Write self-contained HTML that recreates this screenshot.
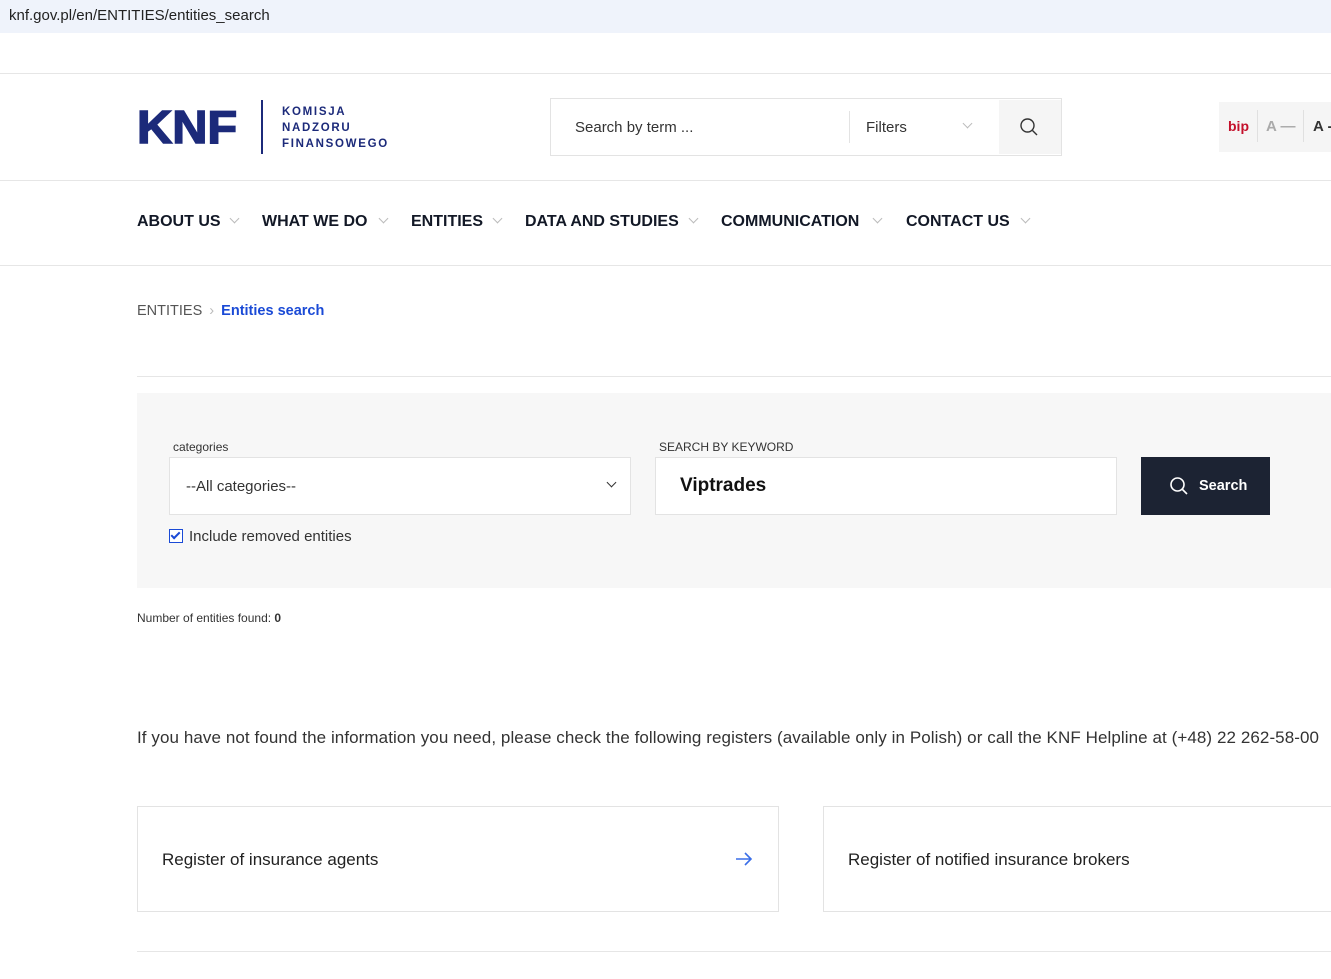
<!DOCTYPE html>
<html><head><meta charset="utf-8"><style>
*{margin:0;padding:0;box-sizing:border-box}
body{width:1331px;height:979px;overflow:hidden;background:#fff;font-family:"Liberation Sans",Arial,sans-serif;color:#1b1f2b;position:relative}
.abs{position:absolute;white-space:nowrap}
.nav span{position:absolute;top:213px;font-size:16px;font-weight:bold;color:#121826;white-space:nowrap}
.chev{display:inline-block;width:7px;height:7px;border-right:1.3px solid #bbb;border-bottom:1.3px solid #bbb;transform:rotate(45deg);position:absolute;top:215px}
</style></head><body>
<div class="abs" style="left:0;top:0;width:1331px;height:33px;background:#eff3fb"></div>
<div class="abs" style="left:9px;top:7px;font-size:15px;color:#222">knf.gov.pl/en/ENTITIES/entities_search</div>
<div class="abs" style="left:0;top:73px;width:1331px;height:1px;background:#e6e6e6"></div>
<div class="abs" style="left:137px;top:102px;font-size:46px;font-weight:900;color:#1c2a7a;letter-spacing:0px;line-height:50px;transform:scaleX(1.06);transform-origin:left;-webkit-text-stroke:1.5px #1c2a7a">KNF</div>
<div class="abs" style="left:261px;top:100px;width:2px;height:54px;background:#1c2a7a"></div>
<div class="abs" style="left:282px;top:104px;font-size:11.5px;font-weight:bold;color:#1c2a7a;letter-spacing:1.7px;line-height:16px">KOMISJA<br>NADZORU<br>FINANSOWEGO</div>
<div class="abs" style="left:550px;top:98px;width:512px;height:58px;border:1px solid #e3e3e3"></div>
<div class="abs" style="left:575px;top:119px;font-size:15px;color:#333">Search by term ...</div>
<div class="abs" style="left:849px;top:111px;width:1px;height:32px;background:#e3e3e3"></div>
<div class="abs" style="left:866px;top:119px;font-size:15px;color:#333">Filters</div>
<div class="chev" style="left:964px;top:120px"></div>
<div class="abs" style="left:999px;top:100px;width:62px;height:54px;background:#f5f5f5"></div>
<svg class="abs" style="left:1019px;top:117px" width="20" height="20" viewBox="0 0 20 20"><circle cx="8.5" cy="8.5" r="6.5" fill="none" stroke="#333" stroke-width="1.4"/><path d="M13.5 13.5L18 18" stroke="#333" stroke-width="1.4"/></svg>
<div class="abs" style="left:1219px;top:102px;width:112px;height:50px;background:#f5f5f5"></div>
<div class="abs" style="left:1228px;top:118px;font-size:14px;font-weight:bold;color:#c4102b">bip</div>
<div class="abs" style="left:1257px;top:110px;width:1px;height:32px;background:#e0e0e0"></div>
<div class="abs" style="left:1266px;top:118px;font-size:15px;font-weight:bold;color:#aaa">A —</div>
<div class="abs" style="left:1303px;top:110px;width:1px;height:32px;background:#e0e0e0"></div>
<div class="abs" style="left:1313px;top:118px;font-size:15px;font-weight:bold;color:#333">A -</div>
<div class="abs" style="left:0;top:180px;width:1331px;height:1px;background:#e6e6e6"></div>
<div class="nav">
<span style="left:137px">ABOUT US</span><i class="chev" style="left:231px"></i>
<span style="left:262px">WHAT WE DO</span><i class="chev" style="left:380px"></i>
<span style="left:411px">ENTITIES</span><i class="chev" style="left:494px"></i>
<span style="left:525px">DATA AND STUDIES</span><i class="chev" style="left:690px"></i>
<span style="left:721px">COMMUNICATION</span><i class="chev" style="left:874px"></i>
<span style="left:906px">CONTACT US</span><i class="chev" style="left:1022px"></i>
</div>
<div class="abs" style="left:0;top:265px;width:1331px;height:1px;background:#e6e6e6"></div>
<div class="abs" style="left:137px;top:303px;font-size:14.5px;color:#555">ENTITIES <span style="color:#bbb;margin:0 3px">›</span> <b style="color:#1a4ad6">Entities search</b></div>
<div class="abs" style="left:137px;top:376px;width:1194px;height:1px;background:#e6e6e6"></div>
<div class="abs" style="left:137px;top:393px;width:1194px;height:195px;background:#f7f7f7"></div>
<div class="abs" style="left:173px;top:440px;font-size:12px;color:#333">categories</div>
<div class="abs" style="left:169px;top:457px;width:462px;height:58px;background:#fff;border:1px solid #e3e3e3"></div>
<div class="abs" style="left:186px;top:478px;font-size:15px;color:#333">--All categories--</div>
<div class="chev" style="left:608px;top:479px;border-color:#333"></div>
<div class="abs" style="left:659px;top:440px;font-size:12px;color:#333">SEARCH BY KEYWORD</div>
<div class="abs" style="left:655px;top:457px;width:462px;height:58px;background:#fff;border:1px solid #e3e3e3"></div>
<div class="abs" style="left:680px;top:475px;font-size:19px;font-weight:bold;color:#111">Viptrades</div>
<div class="abs" style="left:1141px;top:457px;width:129px;height:58px;background:#1c2333"></div>
<svg class="abs" style="left:1169px;top:476px" width="20" height="20" viewBox="0 0 20 20"><circle cx="8.5" cy="8.5" r="6.5" fill="none" stroke="#fff" stroke-width="1.6"/><path d="M13.5 13.5L18 18" stroke="#fff" stroke-width="1.6"/></svg>
<div class="abs" style="left:1199px;top:478px;font-size:14.5px;font-weight:bold;color:#fff">Search</div>
<div class="abs" style="left:169px;top:529px;width:14px;height:14px;border:1px solid #1a4ad6;background:#fff"></div>
<div class="abs" style="left:173px;top:530px;width:5px;height:9px;border-right:2px solid #1a4ad6;border-bottom:2px solid #1a4ad6;transform:rotate(45deg)"></div>
<div class="abs" style="left:189px;top:528px;font-size:15px;color:#333">Include removed entities</div>
<div class="abs" style="left:137px;top:611px;font-size:12px;color:#333">Number of entities found: <b>0</b></div>
<div class="abs" style="left:137px;top:728px;font-size:17px;color:#333;letter-spacing:0.08px">If you have not found the information you need, please check the following registers (available only in Polish) or call the KNF Helpline at (+48) 22 262-58-00</div>
<div class="abs" style="left:137px;top:806px;width:642px;height:106px;border:1px solid #e3e3e3"></div>
<div class="abs" style="left:162px;top:850px;font-size:17px;color:#222">Register of insurance agents</div>
<svg class="abs" style="left:735px;top:852px" width="18" height="14" viewBox="0 0 18 14"><path d="M1 7H16M10 1L16 7L10 13" fill="none" stroke="#3a6ee8" stroke-width="1.6"/></svg>
<div class="abs" style="left:823px;top:806px;width:520px;height:106px;border:1px solid #e3e3e3"></div>
<div class="abs" style="left:848px;top:850px;font-size:17px;color:#222">Register of notified insurance brokers</div>
<div class="abs" style="left:137px;top:951px;width:1194px;height:1px;background:#e6e6e6"></div>
</body></html>
